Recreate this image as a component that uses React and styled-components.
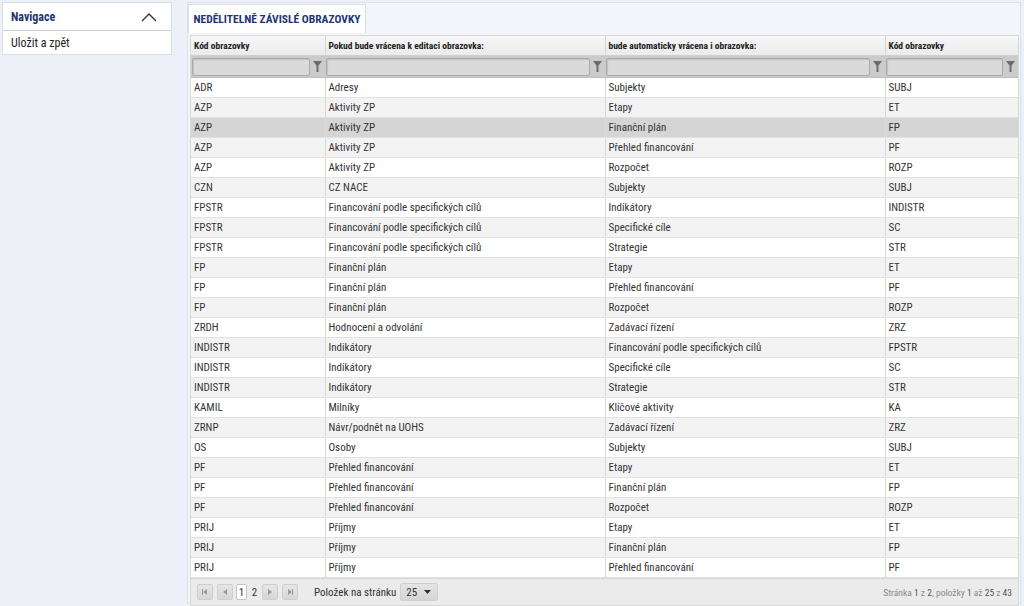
import React from 'react';
import styled, { createGlobalStyle } from 'styled-components';

const GlobalStyle = createGlobalStyle`
  body {
    margin: 0;
    background: #eef0f8;
    font-family: "Liberation Sans Narrow", "Roboto Condensed", "DejaVu Sans Condensed", "Liberation Sans", sans-serif;
    color: #333;
  }
`;

const rows = [
    ['ADR', 'Adresy', 'Subjekty', 'SUBJ'],
    ['AZP', 'Aktivity ZP', 'Etapy', 'ET'],
    ['AZP', 'Aktivity ZP', 'Finanční plán', 'FP'],
    ['AZP', 'Aktivity ZP', 'Přehled financování', 'PF'],
    ['AZP', 'Aktivity ZP', 'Rozpočet', 'ROZP'],
    ['CZN', 'CZ NACE', 'Subjekty', 'SUBJ'],
    ['FPSTR', 'Financování podle specifických cílů', 'Indikátory', 'INDISTR'],
    ['FPSTR', 'Financování podle specifických cílů', 'Specifické cíle', 'SC'],
    ['FPSTR', 'Financování podle specifických cílů', 'Strategie', 'STR'],
    ['FP', 'Finanční plán', 'Etapy', 'ET'],
    ['FP', 'Finanční plán', 'Přehled financování', 'PF'],
    ['FP', 'Finanční plán', 'Rozpočet', 'ROZP'],
    ['ZRDH', 'Hodnocení a odvolání', 'Zadávací řízení', 'ZRZ'],
    ['INDISTR', 'Indikátory', 'Financování podle specifických cílů', 'FPSTR'],
    ['INDISTR', 'Indikátory', 'Specifické cíle', 'SC'],
    ['INDISTR', 'Indikátory', 'Strategie', 'STR'],
    ['KAMIL', 'Milníky', 'Klíčové aktivity', 'KA'],
    ['ZRNP', 'Návr/podnět na UOHS', 'Zadávací řízení', 'ZRZ'],
    ['OS', 'Osoby', 'Subjekty', 'SUBJ'],
    ['PF', 'Přehled financování', 'Etapy', 'ET'],
    ['PF', 'Přehled financování', 'Finanční plán', 'FP'],
    ['PF', 'Přehled financování', 'Rozpočet', 'ROZP'],
    ['PRIJ', 'Příjmy', 'Etapy', 'ET'],
    ['PRIJ', 'Příjmy', 'Finanční plán', 'FP'],
    ['PRIJ', 'Příjmy', 'Přehled financování', 'PF'],
];

const columns = [
    { title: 'Kód obrazovky', width: 134 },
    { title: 'Pokud bude vrácena k editaci obrazovka:', width: 280 },
    { title: 'bude automaticky vrácena i obrazovka:', width: 280 },
    { title: 'Kód obrazovky', width: 133 },
];

const Page = styled.div`
    display: flex;
    align-items: flex-start;
    gap: 15px;
    padding: 2px 3px 2px 2px;
    height: 602px;
`;

const Nav = styled.div`
    flex-shrink: 0;
    width: 168px;
    background: #fff;
    border: 1px solid #dcdee6;
`;

const NavHeader = styled.div`
    height: 27px;
    display: flex;
    align-items: center;
    justify-content: space-between;
    padding: 0 14px 0 8px;
    border-bottom: 1px solid #cfd1da;
    font-size: 12px;
    font-weight: bold;
    color: #1d3673;
`;

const NavItem = styled.div`
    height: 23px;
    display: flex;
    align-items: center;
    padding: 0 8px;
    font-size: 12px;
    color: #222;
`;

const Panel = styled.div`
    flex: 1;
    min-width: 0;
    height: 100%;
    box-sizing: border-box;
    border: 1px solid #dfe1ea;
    background: #f4f5fa;
    display: flex;
    flex-direction: column;
`;

const Tabs = styled.div`
    display: flex;
    padding-top: 1px;
    height: 31px;
    box-sizing: border-box;
`;

const Tab = styled.div`
    width: 178px;
    height: 29px;
    box-sizing: border-box;
    background: #fff;
    border: 1px solid #dcdee6;
    border-bottom: none;
    display: flex;
    align-items: center;
    justify-content: center;
    font-size: 11.5px;
    font-weight: bold;
    color: #1d3673;
`;

const Grid = styled.div`
    margin: 2px 0 0 2px;
    width: 827px;
    border: 1px solid #d8d8d8;
    background: #fff;
`;

const Table = styled.table`
    border-collapse: collapse;
    table-layout: fixed;
    width: 827px;
    font-size: 11px;
`;

const Th = styled.th`
    height: 19px;
    padding: 0 3px;
    text-align: left;
    font-weight: bold;
    font-size: 9.5px;
    color: #222;
    background: linear-gradient(#f7f7f7, #ebebeb);
    border-left: 1px solid #d6d6d6;
    border-bottom: 1px solid #cfcfcf;
    &:first-child { border-left: none; }
`;

const FilterCell = styled.td`
    height: 21px;
    padding: 0 0 0 1px;
    background: #cbcbcb;
    border-bottom: 1px solid #bdbdbd;
`;

const FilterBox = styled.div`
    display: flex;
    align-items: center;
`;

const FilterInput = styled.div`
    flex: 1;
    height: 16px;
    background: #dadada;
    border: 1px solid #a9a9a9;
    box-shadow: inset 1px 1px 1px rgba(0, 0, 0, 0.12);
    border-radius: 2px;
`;

const FilterBtn = styled.div`
    width: 15px;
    display: flex;
    justify-content: center;
    align-items: center;
`;

const Tr = styled.tr`
    background: ${p => (p.$selected ? '#d5d5d5' : p.$alt ? '#f3f3f3' : '#fff')};
`;

const Td = styled.td`
    height: 19px;
    padding: 0 3px;
    border-left: 1px solid #d9d9d9;
    border-bottom: 1px solid #e1e1e1;
    white-space: nowrap;
    overflow: hidden;
    color: #333;
    &:first-child { border-left: none; }
`;

const Pager = styled.div`
    height: 26px;
    display: flex;
    align-items: center;
    padding: 0 6px;
    background: #ebebeb;
    border-top: 1px solid #d8d8d8;
    font-size: 11px;
    color: #333;
`;

const PageBtn = styled.div`
    width: 16px;
    height: 16px;
    box-sizing: border-box;
    border: 1px solid #cfcfcf;
    border-radius: 2px;
    background: linear-gradient(#e6e6e6, #d6d6d6);
    display: flex;
    align-items: center;
    justify-content: center;
    margin-right: ${p => p.$gap || 4}px;
`;

const PageNum = styled.div`
    min-width: 11px;
    height: 16px;
    box-sizing: border-box;
    display: flex;
    align-items: center;
    justify-content: center;
    margin-right: 2px;
    font-size: 11px;
    background: ${p => (p.$active ? '#fff' : 'transparent')};
    border: 1px solid ${p => (p.$active ? '#c4c4c4' : 'transparent')};
    border-radius: 2px;
`;

const PerPage = styled.span`
    margin-left: 12px;
    margin-right: 4px;
`;

const Select = styled.div`
    width: 38px;
    height: 18px;
    box-sizing: border-box;
    border: 1px solid #cfcfcf;
    border-radius: 2px;
    background: linear-gradient(#e4e4e4, #d4d4d4);
    display: flex;
    align-items: center;
    justify-content: space-between;
    padding: 0 6px 0 5px;
`;

const Info = styled.div`
    margin-left: auto;
    font-size: 9.5px;
    color: #8a8a8a;
    b { color: #555; font-weight: normal; }
`;

const Funnel = () => (
    <svg width="9" height="11" viewBox="0 0 9 11">
        <path d="M0 0 H9 L5.5 4.5 V11 H3.5 V4.5 Z" fill="#6b6b6b" />
    </svg>
);

const Chevron = () => (
    <svg width="16" height="10" viewBox="0 0 16 10">
        <path d="M1 9 L8 2 L15 9" stroke="#333" strokeWidth="1.4" fill="none" />
    </svg>
);

const Arrow = ({ dir, bar }) => (
    <svg width="8" height="8" viewBox="0 0 8 8">
        {dir === 'left' ? <path d="M6 1 L2 4 L6 7 Z" fill="#9a9a9a" /> : <path d="M2 1 L6 4 L2 7 Z" fill="#9a9a9a" />}
        {bar && <rect x={dir === 'left' ? 1 : 6} y="1" width="1" height="6" fill="#9a9a9a" />}
    </svg>
);

export default function App() {
    return (
        <>
            <GlobalStyle />
            <Page>
                <Nav>
                    <NavHeader>
                        Navigace
                        <Chevron />
                    </NavHeader>
                    <NavItem>Uložit a zpět</NavItem>
                </Nav>
                <Panel>
                    <Tabs>
                        <Tab>NEDĚLITELNĚ ZÁVISLÉ OBRAZOVKY</Tab>
                    </Tabs>
                    <Grid>
                        <Table>
                            <colgroup>
                                {columns.map((c, i) => <col key={i} style={{ width: c.width }} />)}
                            </colgroup>
                            <thead>
                                <tr>
                                    {columns.map((c, i) => <Th key={i}>{c.title}</Th>)}
                                </tr>
                                <tr>
                                    {columns.map((c, i) => (
                                        <FilterCell key={i}>
                                            <FilterBox>
                                                <FilterInput />
                                                <FilterBtn><Funnel /></FilterBtn>
                                            </FilterBox>
                                        </FilterCell>
                                    ))}
                                </tr>
                            </thead>
                            <tbody>
                                {rows.map((r, i) => (
                                    <Tr key={i} $alt={i % 2 === 1} $selected={i === 2}>
                                        {r.map((v, j) => <Td key={j}>{v}</Td>)}
                                    </Tr>
                                ))}
                            </tbody>
                        </Table>
                        <Pager>
                            <PageBtn><Arrow dir="left" bar /></PageBtn>
                            <PageBtn $gap={3}><Arrow dir="left" /></PageBtn>
                            <PageNum $active>1</PageNum>
                            <PageNum>2</PageNum>
                            <PageBtn><Arrow dir="right" /></PageBtn>
                            <PageBtn><Arrow dir="right" bar /></PageBtn>
                            <PerPage>Položek na stránku</PerPage>
                            <Select>
                                25
                                <svg width="7" height="4" viewBox="0 0 7 4"><path d="M0 0 H7 L3.5 4 Z" fill="#333" /></svg>
                            </Select>
                            <Info>
                                Stránka <b>1</b> z <b>2</b>, položky <b>1</b> až <b>25</b> z <b>43</b>
                            </Info>
                        </Pager>
                    </Grid>
                </Panel>
            </Page>
        </>
    );
}
